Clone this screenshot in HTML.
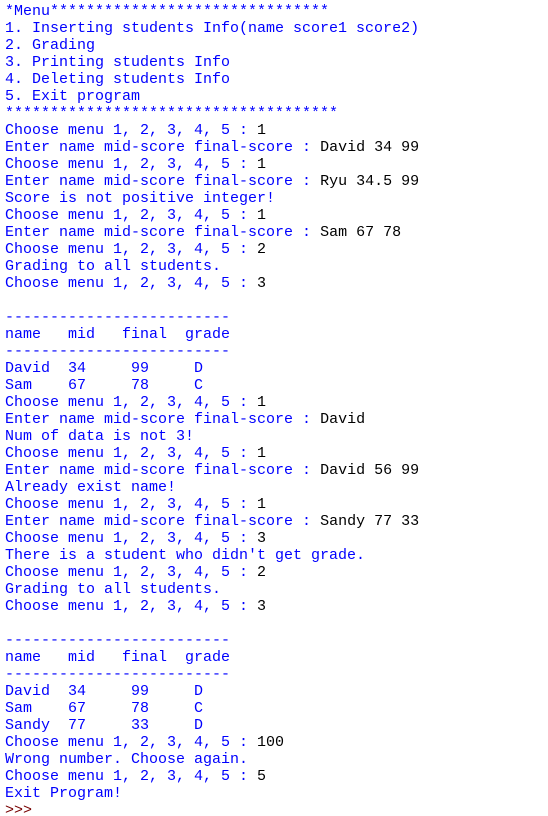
<!DOCTYPE html>
<html><head><meta charset="utf-8"><style>
html,body{margin:0;padding:0;background:#fff;width:548px;height:816px;overflow:hidden}
pre{margin:0;padding:3px 0 0 5px;font-family:"Liberation Mono","NanumGothic",monospace;font-size:15px;line-height:17px;color:#0000ff;white-space:pre}
b{font-weight:normal;color:#000}
i{font-style:normal;color:#770000}
</style></head><body><pre>*Menu*******************************
1. Inserting students Info(name score1 score2)
2. Grading
3. Printing students Info
4. Deleting students Info
5. Exit program
*************************************
Choose menu 1, 2, 3, 4, 5 : <b>1</b>
Enter name mid-score final-score : <b>David 34 99</b>
Choose menu 1, 2, 3, 4, 5 : <b>1</b>
Enter name mid-score final-score : <b>Ryu 34.5 99</b>
Score is not positive integer!
Choose menu 1, 2, 3, 4, 5 : <b>1</b>
Enter name mid-score final-score : <b>Sam 67 78</b>
Choose menu 1, 2, 3, 4, 5 : <b>2</b>
Grading to all students.
Choose menu 1, 2, 3, 4, 5 : <b>3</b>

-------------------------
name   mid   final  grade
-------------------------
David  34     99     D
Sam    67     78     C
Choose menu 1, 2, 3, 4, 5 : <b>1</b>
Enter name mid-score final-score : <b>David</b>
Num of data is not 3!
Choose menu 1, 2, 3, 4, 5 : <b>1</b>
Enter name mid-score final-score : <b>David 56 99</b>
Already exist name!
Choose menu 1, 2, 3, 4, 5 : <b>1</b>
Enter name mid-score final-score : <b>Sandy 77 33</b>
Choose menu 1, 2, 3, 4, 5 : <b>3</b>
There is a student who didn't get grade.
Choose menu 1, 2, 3, 4, 5 : <b>2</b>
Grading to all students.
Choose menu 1, 2, 3, 4, 5 : <b>3</b>

-------------------------
name   mid   final  grade
-------------------------
David  34     99     D
Sam    67     78     C
Sandy  77     33     D
Choose menu 1, 2, 3, 4, 5 : <b>100</b>
Wrong number. Choose again.
Choose menu 1, 2, 3, 4, 5 : <b>5</b>
Exit Program!
<i>&gt;&gt;&gt;</i> </pre></body></html>
